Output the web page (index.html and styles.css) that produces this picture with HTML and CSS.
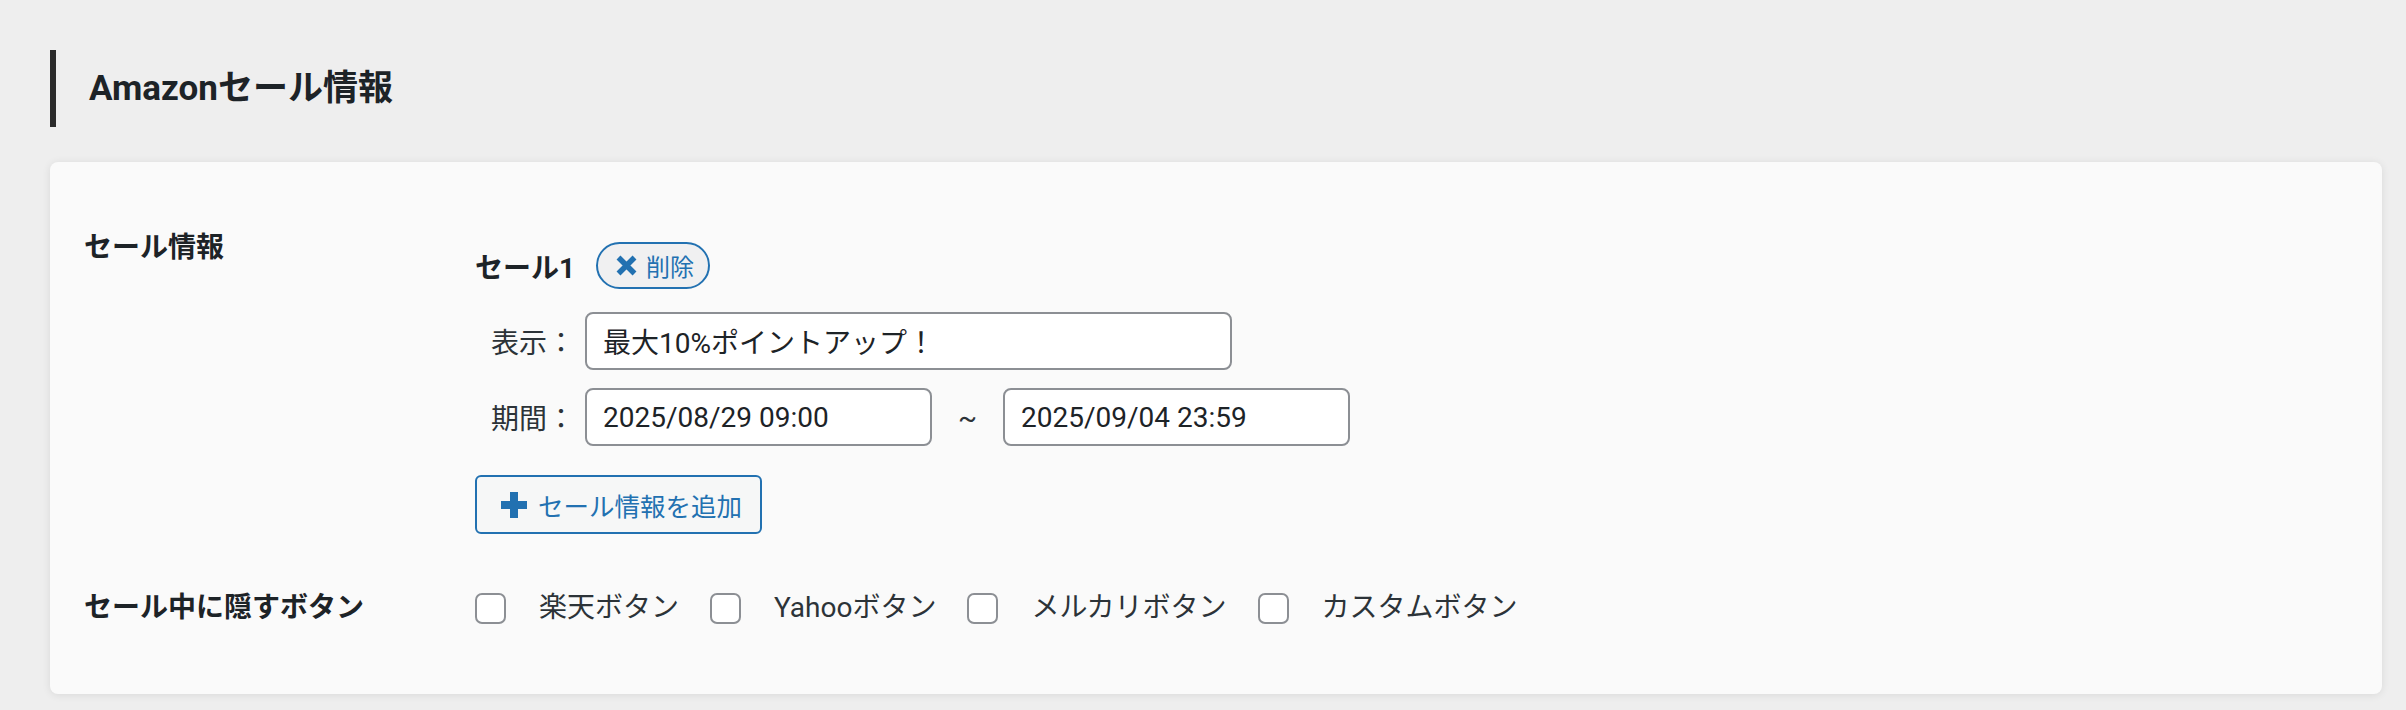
FILE: index.html
```html
<!DOCTYPE html>
<html lang="ja">
<head>
  <meta charset="UTF-8" />
  <meta name="viewport" content="width=device-width, initial-scale=1.0"/>
  <title>Amazonセール情報</title>
  <link rel="stylesheet" href="styles.css">
</head>
<body>
  <div class="wrap">
    <h2 class="section-title">Amazonセール情報</h2>

    <div class="card">
      <div class="form-grid">
        <div class="field-label field-label--top">セール情報</div>
        <div class="field-body">
          <div class="sale-item">
            <div class="sale-head">
              <span class="sale-name">セール1</span>
              <button type="button" class="pill-btn">
                <svg class="icon-x" width="21" height="21" viewBox="0 0 21 21" aria-hidden="true">
                  <path d="M2.5 2.5L18.5 18.5M18.5 2.5L2.5 18.5"/>
                </svg>
                <span>削除</span>
              </button>
            </div>

            <div class="sale-row">
              <label class="row-label" for="sale-text">表示：</label>
              <input class="text-input text-input--wide" id="sale-text" type="text" value="最大10%ポイントアップ！">
            </div>

            <div class="sale-row sale-row--period">
              <label class="row-label" for="sale-start">期間：</label>
              <input class="text-input text-input--date" id="sale-start" type="text" value="2025/08/29 09:00">
              <span class="tilde">~</span>
              <input class="text-input text-input--date" id="sale-end" type="text" value="2025/09/04 23:59">
            </div>
          </div>

          <button type="button" class="add-btn">
            <svg class="icon-plus" width="26" height="26" viewBox="0 0 26 26" aria-hidden="true">
              <path d="M9 0h8v9h9v8h-9v9H9v-9H0V9h9z"/>
            </svg>
            <span>セール情報を追加</span>
          </button>
        </div>

        <div class="field-label">セール中に隠すボタン</div>
        <div class="field-body checks">
          <label class="check"><input type="checkbox"><span>楽天ボタン</span></label>
          <label class="check"><input type="checkbox"><span>Yahooボタン</span></label>
          <label class="check"><input type="checkbox"><span>メルカリボタン</span></label>
          <label class="check"><input type="checkbox"><span>カスタムボタン</span></label>
        </div>
      </div>
    </div>
  </div>
</body>
</html>
```

FILE: styles.css
```css
body {
  margin: 0;
  background: #eeeeee;
  color: #1d2327;
  font-family: Roboto, "Noto Sans CJK JP", sans-serif;
  font-size: 28px;
}
.wrap {
  padding: 50px 24px 16px 50px;
}
.section-title {
  margin: 0 0 35px;
  height: 77px;
  line-height: 77px;
  border-left: 6px solid #2b2b2b;
  padding-left: 33px;
  font-size: 35px;
  font-weight: 700;
  color: #1d2327;
}
.card {
  background: #fafafa;
  border-radius: 8px;
  box-shadow: 0 1px 8px rgba(0, 0, 0, 0.09);
  padding: 65px 34px 65px 34px;
}
.form-grid {
  display: grid;
  grid-template-columns: 391px 1fr;
  row-gap: 53px;
}
.field-label {
  font-weight: 700;
  line-height: 42px;
  display: flex;
  align-items: center;
}
.field-label--top {
  align-items: flex-start;
}
.field-body {
  padding-top: 15px;
}

/* sale block */
.sale-head {
  display: flex;
  align-items: center;
  gap: 21px;
  height: 47px;
  margin-bottom: 23px;
}
.sale-name {
  font-weight: 700;
}
.pill-btn {
  display: inline-flex;
  align-items: center;
  gap: 9px;
  box-sizing: border-box;
  height: 47px;
  padding: 0 14px 0 18px;
  border: 2px solid #2271b1;
  border-radius: 24px;
  background: #f0f0f1;
  color: #2271b1;
  font-family: inherit;
  font-size: 24px;
}
.icon-x {
  stroke: #2271b1;
  stroke-width: 5.5;
  fill: none;
}
.sale-row {
  display: flex;
  align-items: center;
  margin-bottom: 18px;
  padding-left: 16px;
}
.sale-row--period {
  margin-bottom: 29px;
}
.row-label {
  width: 84px;
  margin-right: 10px;
  color: #2c3338;
}
.text-input {
  box-sizing: border-box;
  height: 58px;
  padding: 0 16px;
  border: 2px solid #8c8f94;
  border-radius: 8px;
  background: #fff;
  color: #1d2327;
  font-family: inherit;
  font-size: 28px;
}
.text-input--wide {
  width: 647px;
}
.text-input--date {
  width: 347px;
}
.tilde {
  width: 71px;
  text-align: center;
  color: #2c3338;
}
.add-btn {
  display: inline-flex;
  align-items: center;
  gap: 11px;
  box-sizing: border-box;
  height: 59px;
  padding: 0 18px 0 24px;
  border: 2px solid #2271b1;
  border-radius: 6px;
  background: #f6f7f7;
  color: #2271b1;
  font-family: inherit;
  font-size: 25.5px;
}
.icon-plus {
  fill: #2271b1;
}

/* checkboxes */
.checks {
  display: flex;
  align-items: center;
  gap: 31px;
  padding-top: 0;
  line-height: 42px;
}
.check {
  display: inline-flex;
  align-items: center;
  color: #2c3338;
}
.check input {
  appearance: none;
  box-sizing: border-box;
  width: 31px;
  height: 31px;
  margin: 0 33px 0 0;
  border: 2px solid #8c8f94;
  border-radius: 7px;
  background: #fff;
}
```
